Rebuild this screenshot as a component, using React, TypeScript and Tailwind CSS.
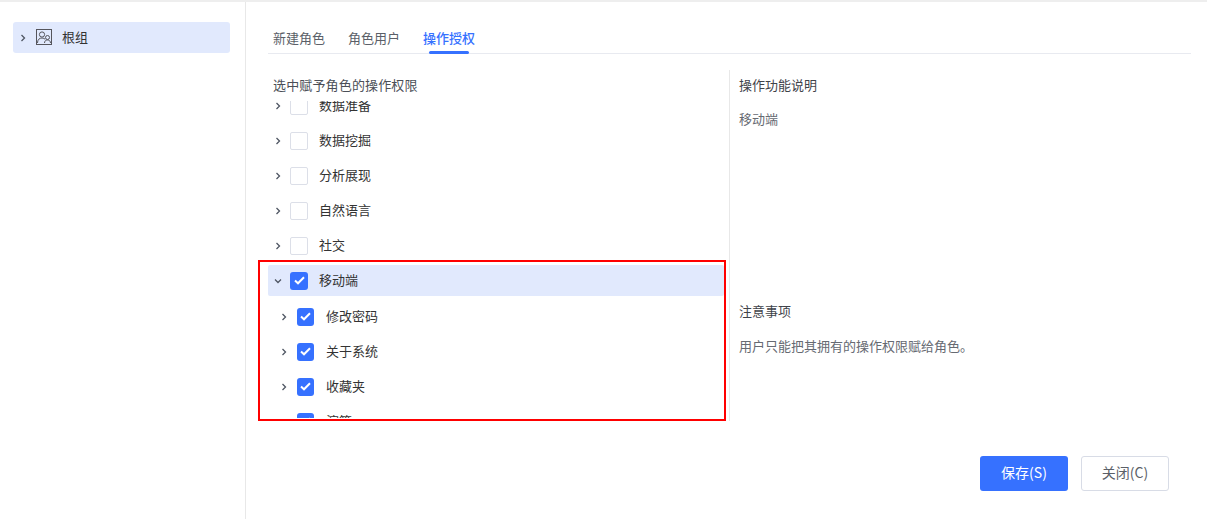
import React from "react";

function Chevron({ down = false }: { down?: boolean }) {
  return (
    <svg width="8" height="8" viewBox="0 0 8 8" fill="none" stroke="#4f5663" strokeWidth="1.3" className="shrink-0">
      {down ? <path d="M1 2.5 L4 5.5 L7 2.5" /> : <path d="M2.5 1 L5.5 4 L2.5 7" />}
    </svg>
  );
}

function Check({ on, big = false }: { on: boolean; big?: boolean }) {
  const size = big ? "w-[18px] h-[18px]" : "w-[17px] h-[18px]";
  if (!on) return <span className={`block ${size} shrink-0 rounded-[2px] border border-[#dcdfe8] bg-white`} />;
  return (
    <span className={`${size} shrink-0 rounded-[3px] bg-[#3671ff] flex items-center justify-center`}>
      <svg width="11" height="9" viewBox="0 0 11 9" fill="none" stroke="#ffffff" strokeWidth="2">
        <path d="M1 4.5 L4 7.3 L10 1.3" />
      </svg>
    </span>
  );
}

function Row({ label, on = false, down = false, active = false, child = false }: { label: string; on?: boolean; down?: boolean; active?: boolean; child?: boolean }) {
  return (
    <div className={`h-[31px] mb-[4px] flex items-center rounded-[2px] ${active ? "bg-[#e1e9fd]" : ""} ${child ? "pl-[12px]" : "pl-[6px]"}`}>
      <Chevron down={down} />
      <span className={child ? "ml-[9px]" : "ml-[8px]"}>
        <Check on={on} big={!child} />
      </span>
      <span className={`text-[13px] leading-[18px] -mt-[2px] text-[#333] ${child ? "ml-[12px]" : "ml-[11px]"}`}>{label}</span>
    </div>
  );
}

export default function App() {
  return (
    <div className="relative w-[1207px] h-[519px] bg-white border-t-2 border-[#eeeeee] flex overflow-hidden font-['Noto_Sans_CJK_SC','Noto_Sans',sans-serif] text-[13px] text-[#4b4f57]">
      <aside className="w-[246px] shrink-0 border-r border-[#e8e8e8] pt-[20px] pl-[13px] pr-[15px]">
        <div className="h-[31px] rounded-[3px] bg-[#e1e9fd] flex items-center pl-[6px]">
          <Chevron />
          <svg width="16" height="16" viewBox="0 0 16 16" fill="none" stroke="#55555c" strokeWidth="1" className="ml-[9px] -mt-[1px] shrink-0">
            <rect x="0.5" y="0.5" width="15" height="15" />
            <circle cx="6" cy="5.5" r="2.6" />
            <path d="M1.5 14 C1.5 10.5 3.5 9 6 9 C7.5 9 8.6 9.5 9.2 10.4" />
            <circle cx="11.5" cy="8.5" r="2" />
            <path d="M8.5 14 C8.5 12 9.8 11 11.5 11 C13.2 11 14.5 12 14.5 14" />
          </svg>
          <span className="ml-[10px] -mt-[2px] text-[#333]">根组</span>
        </div>
      </aside>

      <main className="flex-1 min-w-0 pl-[22px] pr-[16px] flex flex-col">
        <nav className="h-[52px] shrink-0 border-b border-[#e8eaf0] flex items-end">
          <div className="flex gap-[23px] pl-[5px]">
            <span className="h-[25px] text-[#5b5f68]">新建角色</span>
            <span className="h-[25px] text-[#5b5f68]">角色用户</span>
            <span className="relative h-[25px] text-[#3671ff] font-medium">
              操作授权
              <span className="absolute left-[6px] right-[6px] bottom-[-1px] h-[3px] rounded-[2px] bg-[#3671ff]" />
            </span>
          </div>
        </nav>

        <div className="flex mt-[16px] h-[351px] shrink-0">
          <section className="w-[462px] shrink-0 border-r border-[#e8e8e8] flex flex-col pr-[4px]">
            <h3 className="pl-[5px] h-[31px] pt-[6px] leading-[18px] font-normal tracking-[0.15px] text-[#4b4f57]">选中赋予角色的操作权限</h3>
            <div className="h-[317px] overflow-hidden">
              <div className="-mt-[11px] w-[456px]">
                <Row label="数据准备" />
                <Row label="数据挖掘" />
                <Row label="分析展现" />
                <Row label="自然语言" />
                <Row label="社交" />
                <Row label="移动端" on down active />
                <div className="h-px" />
                <Row label="修改密码" on child />
                <Row label="关于系统" on child />
                <Row label="收藏夹" on child />
                <Row label="演算" on child />
              </div>
            </div>
          </section>
          <section className="pl-[9px] flex flex-col">
            <h3 className="pt-[6px] leading-[18px] font-normal text-[#3f434a]">操作功能说明</h3>
            <p className="mt-[16px] leading-[18px] text-[#666a72]">移动端</p>
            <h3 className="mt-[174px] leading-[18px] font-normal text-[#3f434a]">注意事项</h3>
            <p className="mt-[17px] leading-[18px] text-[#666a72]">用户只能把其拥有的操作权限赋给角色。</p>
          </section>
        </div>

        <div className="mt-[35px] flex justify-end gap-[13px] pr-[22px]">
          <button className="w-[88px] h-[35px] pb-[2px] rounded-[3px] bg-[#3671ff] text-white text-[14px]">保存(S)</button>
          <button className="w-[88px] h-[35px] pb-[2px] rounded-[3px] border border-[#d8dce6] bg-white text-[#5b5f68] text-[14px]">关闭(C)</button>
        </div>
      </main>

      {/* annotation drawn over the screenshot */}
      <div className="absolute left-[258px] top-[258px] w-[468px] h-[161px] border-2 border-[#ff0000] pointer-events-none" />
    </div>
  );
}
